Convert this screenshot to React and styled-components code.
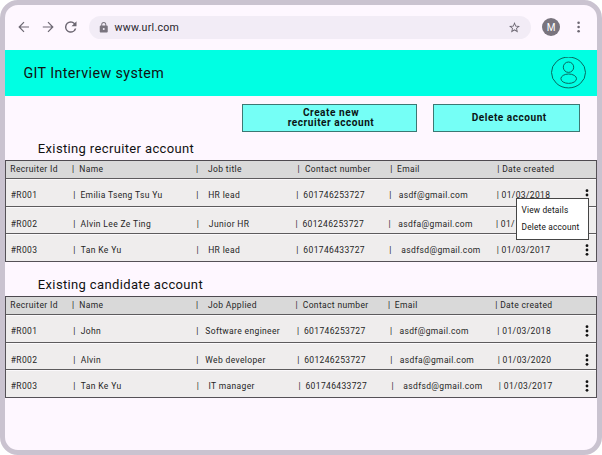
import React from "react";
import styled, { createGlobalStyle } from "styled-components";

const Global = createGlobalStyle`
  * { box-sizing: border-box; }
  body { margin: 0; background: #fff; font-family: Roboto, "Liberation Sans", sans-serif; color: #111; }
`;

const Window = styled.div`
  width: 602px;
  height: 455px;
  overflow: hidden;
  border: 5px solid #cac3d0;
  border-radius: 18px;
  background: #fef7ff;
`;

const BrowserBar = styled.div`
  display: flex;
  align-items: center;
  height: 44.5px;
  padding: 0 9.5px 0 13px;
  color: #6c6772;
  > svg { flex: none; }
`;

const NavIcons = styled.div`
  display: flex;
  gap: 11.5px;
  width: 71px;
  flex: none;
`;

const Address = styled.div`
  display: flex;
  align-items: center;
  width: 442px;
  height: 23px;
  padding: 0 11px 0 10px;
  border-radius: 12px;
  background: #f2ecf6;
  flex: none;
`;

const Url = styled.span`
  flex: 1;
  margin-left: 6px;
  font-size: 10.6px;
  letter-spacing: 0.27px;
  color: #27242b;
`;

const Avatar = styled.div`
  width: 18px;
  height: 18px;
  margin: 0 12px 0 11px;
  border-radius: 50%;
  background: #79747e;
  color: #fff;
  font-size: 10px;
  line-height: 19px;
  text-align: center;
  flex: none;
`;

const Banner = styled.header`
  display: flex;
  align-items: center;
  justify-content: space-between;
  height: 46px;
  padding: 0 11px 0 18.4px;
  background: #00ffe3;
`;

const Title = styled.h1`
  margin: 0;
  font-size: 14.3px;
  font-weight: 400;
  letter-spacing: 0.4px;
`;

const Actions = styled.div`
  display: flex;
  justify-content: flex-end;
  gap: 15.5px;
  padding: 8.5px 17px 0 0;
`;

const ActionButton = styled.button`
  width: ${(p) => p.$width}px;
  height: 28px;
  padding: 0 0 0 ${(p) => p.$shift || 0}px;
  border: 1px solid #3c7873;
  background: #75fff6;
  color: #0b1515;
  font: 700 10.1px/10px Roboto, sans-serif;
  letter-spacing: 0.52px;
  white-space: pre-line;
`;

const SectionTitle = styled.h2`
  height: ${(p) => p.$height}px;
  margin: 0;
  padding: ${(p) => p.$top}px 0 0 32.8px;
  font-size: 13px;
  font-weight: 400;
  line-height: 16px;
  letter-spacing: 0.36px;
`;

const Table = styled.section`
  position: relative;
  width: 592px;
  border: 1px solid #555157;
  border-top-color: #4e4a50;
  background: #efeded;
`;

const Row = styled.div`
  display: flex;
  height: ${(p) => p.$height}px;
  padding-top: ${(p) => p.$top}px;
  background: ${(p) => (p.$head ? "#d9d9d9" : "#efeded")};
  border-bottom: ${(p) => (p.$last ? "none" : "1px solid #5d5b5d")};
  box-shadow: ${(p) => (p.$head ? "none" : "inset 0 1px #fbf9fb")};
  font-size: 8.5px;
  line-height: 10px;
  letter-spacing: 0.36px;
  color: #252525;
  white-space: nowrap;
`;

const Cell = styled.span`
  width: ${(p) => p.$width}px;
  flex: none;
`;

const DotsIcon = styled.svg`
  width: 4px;
  height: 12px;
  margin-top: -1px;
  flex: none;
`;

const Menu = styled.div`
  position: absolute;
  top: 37px;
  right: 7px;
  display: flex;
  flex-direction: column;
  gap: 7.5px;
  width: 73.5px;
  height: 42px;
  padding: 5.5px 0 0 5px;
  border: 1px solid #454545;
  background: #fff;
  font-size: 8.3px;
  line-height: 10px;
  letter-spacing: 0.19px;
  white-space: nowrap;
`;

const EDGE = 6;
const DOTS_X = 585;

function TableRow({ texts, starts, head, last, height, top }) {
  const stops = [...starts, DOTS_X];
  return (
    <Row $head={head} $last={last} $height={height} $top={top}>
      <Cell $width={stops[0] - EDGE} />
      {texts.map((text, i) => (
        <Cell key={i} $width={stops[i + 1] - stops[i]}>{text}</Cell>
      ))}
      {!head && (
        <DotsIcon viewBox="0 0 4 12" fill="#111">
          <circle cx="2" cy="1.7" r="1.4" />
          <circle cx="2" cy="6" r="1.4" />
          <circle cx="2" cy="10.3" r="1.4" />
        </DotsIcon>
      )}
    </Row>
  );
}

const line = (id, name, job, phone, email, date) => [
  id, "|", name, "|", job, "|", phone, "|", email, `| ${date}`,
];

const LAYOUT = [
  { height: 18, top: 2.5, head: true },
  { height: 28, top: 10.5 },
  { height: 27, top: 11.5 },
  { height: 27, top: 10.5, last: true },
];

const recruiters = [
  [line("Recruiter Id", "Name", "Job title", "Contact number", "Email", "Date created"),
    [10.3, 71.9, 79.3, 196, 208, 297.6, 305, 390.2, 397, 497.3]],
  [line("#R001", "Emilia Tseng Tsu Yu", "HR lead", "601746253727", "asdf@gmail.com", "01/03/2018"),
    [10.7, 73.2, 80.4, 196.3, 208.2, 296.2, 303.3, 389.2, 398.8, 496.7]],
  [line("#R002", "Alvin Lee Ze Ting", "Junior HR", "601246253727", "asdfa@gmail.com", "01/"),
    [10.7, 73.2, 80.6, 196.8, 208.9, 295.5, 302.5, 388.5, 398.4, 496]],
  [line("#R003", "Tan Ke Yu", "HR lead", "601746433727", "asdfsd@gmail.com", "01/03/2017"),
    [10.7, 73.2, 80.8, 196.6, 208.2, 296.2, 303.4, 389.3, 401.4, 496.7]],
];

const candidates = [
  [line("Recruiter Id", "Name", "Job Applied", "Contact number", "Email", "Date created"),
    [10.3, 71.9, 79.3, 196, 208, 295.6, 302.8, 388, 394.8, 495.3]],
  [line("#R001", "John", "Software engineer", "601746253727", "asdf@gmail.com", "01/03/2018"),
    [10.7, 73.2, 80.8, 196.3, 205.3, 296.9, 304, 390, 399.5, 497.4]],
  [line("#R002", "Alvin", "Web developer", "601246253727", "asdfa@gmail.com", "01/03/2020"),
    [10.7, 73.2, 80.8, 196.3, 205.3, 297.2, 304.2, 390.2, 399.8, 497.7]],
  [line("#R003", "Tan Ke Yu", "IT manager", "601746433727", "asdfsd@gmail.com", "01/03/2017"),
    [10.7, 73.2, 80.8, 196.8, 208.4, 298.5, 305.5, 391.5, 403.3, 498.9]],
];

function AccountTable({ rows, children }) {
  return (
    <Table>
      {rows.map(([texts, starts], i) => (
        <TableRow key={i} texts={texts} starts={starts} {...LAYOUT[i]} />
      ))}
      {children}
    </Table>
  );
}

export default function App() {
  return (
    <>
      <Global />
      <Window>
        <BrowserBar>
          <NavIcons>
            <svg width="12" height="12" viewBox="0 0 12 12" fill="none" stroke="currentColor" strokeWidth="1.2">
              <path d="M11 6H1.6M6 1.2L1.2 6 6 10.8" />
            </svg>
            <svg width="12" height="12" viewBox="0 0 12 12" fill="none" stroke="currentColor" strokeWidth="1.2">
              <path d="M.8 6h9.6M6 1.2L10.8 6 6 10.8" />
            </svg>
            <svg width="11.5" height="12" viewBox="4 4 16 16" fill="currentColor">
              <path d="M17.65 6.35A7.96 7.96 0 0 0 12 4a8 8 0 1 0 7.73 10h-2.08A6 6 0 1 1 12 6c1.66 0 3.14.69 4.22 1.78L13 11h7V4z" />
            </svg>
          </NavIcons>
          <Address>
            <svg width="9.5" height="10.5" viewBox="3 1 18 21" fill="#79747e">
              <path d="M18 8h-1V6A5 5 0 0 0 7 6v2H6a2 2 0 0 0-2 2v10c0 1.1.9 2 2 2h12a2 2 0 0 0 2-2V10a2 2 0 0 0-2-2zm-6 9a2 2 0 1 1 0-4 2 2 0 0 1 0 4zm3.1-9H8.9V6a3.1 3.1 0 0 1 6.2 0z" />
            </svg>
            <Url>www.url.com</Url>
            <svg width="11" height="11" viewBox="2 2 20 20" fill="#6c6772">
              <path d="M22 9.24l-7.19-.62L12 2 9.19 8.63 2 9.24l5.46 4.73L5.82 21 12 17.27 18.18 21l-1.63-7.03zM12 15.4l-3.76 2.27 1-4.28-3.32-2.88 4.38-.38L12 6.1l1.71 4.04 4.38.38-3.32 2.88 1 4.28z" />
            </svg>
          </Address>
          <Avatar>M</Avatar>
          <svg width="14" height="12" viewBox="0 0 14 12" fill="currentColor">
            <circle cx="6.6" cy="1.8" r="1.3" />
            <circle cx="6.6" cy="6" r="1.3" />
            <circle cx="6.6" cy="10.2" r="1.3" />
          </svg>
        </BrowserBar>
        <Banner>
          <Title>GIT Interview system</Title>
          <svg width="35" height="32" viewBox="0 0 35 32" fill="none" stroke="#08685f" strokeWidth="1">
            <ellipse cx="17.5" cy="15.5" rx="17" ry="15.4" />
            <circle cx="17.5" cy="10.2" r="5.2" />
            <ellipse cx="17.7" cy="21.7" rx="7.8" ry="4.7" />
          </svg>
        </Banner>
        <Actions>
          <ActionButton $width={175} $shift={3}>{"Create new\nrecruiter account"}</ActionButton>
          <ActionButton $width={147.5} $shift={6}>Delete account</ActionButton>
        </Actions>
        <SectionTitle $height={28} $top={8.5}>Existing recruiter account</SectionTitle>
        <AccountTable rows={recruiters}>
          <Menu>
            <span>View details</span>
            <span>Delete account</span>
          </Menu>
        </AccountTable>
        <SectionTitle $height={34} $top={14.5}>Existing candidate account</SectionTitle>
        <AccountTable rows={candidates} />
      </Window>
    </>
  );
}
